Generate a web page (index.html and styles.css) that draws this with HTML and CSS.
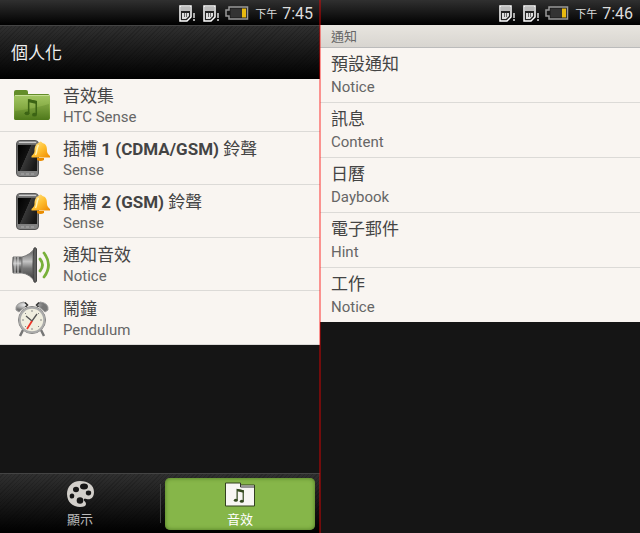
FILE: index.html
```html
<!DOCTYPE html>
<html lang="zh-Hant">
<head>
    <meta charset="UTF-8">
    <meta name="viewport" content="width=device-width, initial-scale=1.0">
    <title>個人化</title>
    <link rel="stylesheet" href="styles.css">
</head>
<body>
    <svg width="0" height="0" class="defs" aria-hidden="true">
        <defs>
            <linearGradient id="green" x1="0" y1="0" x2="0" y2="1"><stop offset="0" stop-color="#a3c763"/><stop offset="0.5" stop-color="#86ab45"/><stop offset="1" stop-color="#567f1f"/></linearGradient>
            <linearGradient id="gold" x1="0" y1="0" x2="1" y2="1"><stop offset="0" stop-color="#ffe89a"/><stop offset="0.5" stop-color="#ffc030"/><stop offset="1" stop-color="#ef8a00"/></linearGradient>
            <linearGradient id="screen" x1="0" y1="0" x2="1" y2="0.6"><stop offset="0" stop-color="#000"/><stop offset="0.5" stop-color="#111"/><stop offset="0.52" stop-color="#383838"/><stop offset="1" stop-color="#181818"/></linearGradient>
            <linearGradient id="metal" x1="0" y1="0" x2="0" y2="1"><stop offset="0" stop-color="#4a4a4a"/><stop offset="0.4" stop-color="#c4c4c4"/><stop offset="0.6" stop-color="#777"/><stop offset="1" stop-color="#333"/></linearGradient>
            <linearGradient id="case" x1="0" y1="0" x2="0" y2="1"><stop offset="0" stop-color="#999"/><stop offset="0.15" stop-color="#5a5a5a"/><stop offset="1" stop-color="#888"/></linearGradient>
            <radialGradient id="ear" cx="0.35" cy="0.3"><stop offset="0" stop-color="#fff"/><stop offset="1" stop-color="#777"/></radialGradient>
            <symbol id="sim" viewBox="0 0 18 17">
                <path d="M1 1h11v11l-4 4H1z" fill="#222" stroke="#fff" stroke-width="1.500"/>
                <path d="M2 2h9v4H2z" fill="#bbb"/>
                <path d="M3 8h7v3l-3 3H3z" fill="#ddd"/>
                <path d="M5.500 8v4M7.500 8v4" stroke="#666"/>
                <path d="M15 8v5M15 14v2" stroke="#ddd" stroke-width="1.500"/>
            </symbol>
            <symbol id="battery" viewBox="0 0 24 14">
                <path d="M4 1h18.500v12H4V10H1V4h3z" fill="#191919" stroke="#999" stroke-width="1.500"/>
                <path d="M5.500 2.500h12v9h-12z" fill="#333"/>
                <path d="M17 2.500h4v9h-4z" fill="#e8b910"/>
            </symbol>
            <symbol id="phone" viewBox="0 0 38 40">
                <rect x="4.500" y="1.500" width="22" height="36" rx="3.500" fill="url(#case)" stroke="#555"/>
                <path d="M7 3.500h17" stroke="#ccc"/>
                <rect x="6" y="6" width="19" height="26" fill="url(#screen)"/>
                <path d="M9 35h13" stroke="#aaa" stroke-dasharray="3 2"/>
                <path d="M25 19h7v2q-3.500 2-7 0z" fill="#e98c00"/>
                <path d="M26.500 4q2-3 4 0c4 1 4.500 4 4.500 8 0 2 1 3 3 5v1.500H19.500V17c2-2 3-3 3-5 0-4 1-7 4-8z" fill="url(#gold)"/>
                <path d="M26.500 6c-2 3-1 6-3 10" stroke="#fff4b5" stroke-width="1.500" fill="none"/>
            </symbol>
            <symbol id="note" viewBox="0 0 12 16">
                <path d="M4 13V1.500L10.500 3v11" fill="none" stroke="currentColor" stroke-width="1.300"/>
                <path d="M4 1l7 1.500v2.500L4 3.500z" fill="currentColor"/>
                <ellipse cx="2.600" cy="13" rx="2.100" ry="1.600" fill="currentColor"/>
                <ellipse cx="9" cy="14.200" rx="2.100" ry="1.600" fill="currentColor"/>
            </symbol>
        </defs>
    </svg>

    <div class="screens">
        <section class="screen">
            <div class="status-bar">
                <svg class="sim"><use href="#sim"/></svg>
                <svg class="sim"><use href="#sim"/></svg>
                <svg class="battery"><use href="#battery"/></svg>
                <span class="ampm">下午</span>
                <span class="clock">7:45</span>
            </div>
            <header class="title-bar"><h1>個人化</h1></header>
            <ul class="list icon-list">
                <li>
                    <svg class="icon" viewBox="0 0 38 40">
                        <path d="M2 6q0-2 2-2h10q2 0 2 2v2h20q1.500 0 1.500 2v22q0 2-2 2H4q-2 0-2-2z" fill="#638d29"/>
                        <path d="M2 11q0-2 2-2h32q2 0 2 2v21q0 2-2 2H4q-2 0-2-2z" fill="url(#green)"/>
                        <path d="M3 9.500h34" stroke="#c5dd93"/>
                        <path d="M3 25q18-2 34-7v14q0 2-1 2H4q-1 0-1-2z" fill="#315d08" opacity="0.2"/>
                        <use href="#note" x="12" y="12" width="14" height="19" color="#3c6414"/>
                    </svg>
                    <div><h2>音效集</h2><p>HTC Sense</p></div>
                </li>
                <li>
                    <svg class="icon"><use href="#phone"/></svg>
                    <div><h2>插槽 <b>1 (CDMA/GSM)</b> 鈴聲</h2><p>Sense</p></div>
                </li>
                <li>
                    <svg class="icon"><use href="#phone"/></svg>
                    <div><h2>插槽 <b>2 (GSM)</b> 鈴聲</h2><p>Sense</p></div>
                </li>
                <li>
                    <svg class="icon" viewBox="0 0 38 40">
                        <path d="M1 12h9v16H1q-1-8 0-16z" fill="url(#metal)" stroke="#777"/>
                        <path d="M10 12q8-2 13-9v34q-5-8-13-9z" fill="url(#metal)" stroke="#777"/>
                        <path d="M3 12v16M6 12v16" stroke="#ddd"/>
                        <path d="M22 3q2-1 2.500 1v32q-.5 2-2.500 1-1-8-1-17t1-17z" fill="#606060" stroke="#444"/>
                        <path d="M28 14q5 6 0 12M32 8q9 12 0 24" fill="none" stroke="#78b03a" stroke-width="2.800" stroke-linecap="round"/>
                    </svg>
                    <div><h2>通知音效</h2><p>Notice</p></div>
                </li>
                <li>
                    <svg class="icon" viewBox="0 0 38 40">
                        <path d="M11 31l-3 6M29 31l3 6" stroke="#777" stroke-width="2.500"/>
                        <path d="M4 11q-1-7 8-8l3 3-8 7zM36 11q1-7-8-8l-3 3 8 7z" fill="url(#ear)" stroke="#999"/>
                        <path d="M13 3.500l2.500 2.500-2 2M27 3.500L24.500 6l2 2" fill="none" stroke="#333" stroke-width="1.500"/>
                        <circle cx="20" cy="21" r="13.500" fill="#f0eedf" stroke="#777"/>
                        <circle cx="20" cy="21" r="12.300" fill="none" stroke="#aaa" stroke-width="2"/>
                        <path d="M20 11v2M20 29v2M10 21h2M28 21h2M13 14l1 1M27 28l-1-1M27 14l-1 1M13 28l1-1" stroke="#888"/>
                        <path d="M14 17l6 5 5-7" fill="none" stroke="#555" stroke-width="1.300"/>
                        <path d="M20 22l-5 8" stroke="#ed3427" stroke-width="1.800"/>
                    </svg>
                    <div><h2>鬧鐘</h2><p>Pendulum</p></div>
                </li>
            </ul>
            <nav class="tabs">
                <button type="button" class="tab">
                    <svg viewBox="0 0 28 28">
                        <path d="M14 1C6 1 1 7 1 14c0 8 6 13 13 13 4 0 6-1 6-3 0-3-3-3-2-5 1-1 4 1 6 0 3-1 4-4 4-7C28 5 22 1 14 1z" fill="#d2cfca"/>
                        <g fill="#171717"><ellipse cx="10" cy="9.500" rx="3" ry="2.700"/><ellipse cx="18" cy="6.500" rx="4" ry="2.900"/><ellipse cx="22.500" cy="13" rx="2.700" ry="2.400"/><ellipse cx="6" cy="16" rx="2.300" ry="2.600"/><circle cx="14" cy="20.500" r="3.300"/></g>
                    </svg>
                    顯示
                </button>
                <button type="button" class="tab active">
                    <svg viewBox="0 0 30 26">
                        <path d="M.500 2h15v2h14v21H.500z" fill="#f8f6f3" stroke="#33411f"/>
                        <path d="M15.500 2v4h14" fill="none" stroke="#333"/>
                        <use href="#note" x="8" y="7" width="12" height="15" color="#34491f"/>
                    </svg>
                    音效
                </button>
            </nav>
        </section>

        <section class="screen">
            <div class="status-bar">
                <svg class="sim"><use href="#sim"/></svg>
                <svg class="sim"><use href="#sim"/></svg>
                <svg class="battery"><use href="#battery"/></svg>
                <span class="ampm">下午</span>
                <span class="clock">7:46</span>
            </div>
            <h3 class="section-title">通知</h3>
            <ul class="list text-list">
                <li><h2>預設通知</h2><p>Notice</p></li>
                <li><h2>訊息</h2><p>Content</p></li>
                <li><h2>日曆</h2><p>Daybook</p></li>
                <li><h2>電子郵件</h2><p>Hint</p></li>
                <li><h2>工作</h2><p>Notice</p></li>
            </ul>
        </section>
    </div>
</body>
</html>
```
FILE: styles.css
```css
* {
    box-sizing: border-box;
}
body {
    margin: 0;
    background-color: #151515;
    font-family: Roboto, "Noto Sans CJK TC", sans-serif;
}
h1, h2, h3, p, ul {
    margin: 0;
    padding: 0;
    font-weight: normal;
}
.defs {
    position: absolute;
}
.screens {
    display: grid;
    grid-template-columns: 1fr 1fr;
    min-height: 100vh;
    position: relative;
}
.screens::after {
    content: "";
    position: absolute;
    top: 0;
    bottom: 0;
    left: 50%;
    width: 2px;
    margin-left: -1px;
    background-color: rgba(255, 0, 0, 0.4);
}
.screen {
    display: flex;
    flex-direction: column;
    min-width: 0;
}
.status-bar {
    display: flex;
    justify-content: flex-end;
    align-items: center;
    height: 25px;
    padding: 1px 7px 0 0;
    background: linear-gradient(#303030, #000);
    color: #ddd;
}
.sim {
    width: 18px;
    height: 17px;
    margin-left: 6px;
}
.battery {
    width: 24px;
    height: 14px;
    margin: 0 6px 0 4px;
}
.ampm {
    margin-right: 5px;
    font-size: 11px;
}
.clock {
    font-size: 16px;
}
.title-bar {
    display: flex;
    align-items: center;
    height: 54px;
    padding-left: 11px;
    border-top: 1px solid #444;
    background: repeating-linear-gradient(135deg, transparent 0 2px, rgba(0, 0, 0, 0.15) 2px 3px), linear-gradient(#303030, #000);
    color: #eee;
}
h1 {
    margin-bottom: 3px;
    font-size: 17px;
}
.list {
    list-style: none;
    background-color: #f9f5f1;
}
.list li {
    border-bottom: 1px solid #dcdad7;
}
h2 {
    color: #444;
    font-size: 17px;
    line-height: 22px;
}
.list p {
    color: #666;
    font-size: 15px;
    line-height: 20px;
}
.icon-list li {
    display: flex;
    align-items: center;
    gap: 13px;
    height: 53px;
    padding: 2px 0 0 12px;
}
.icon-list li:last-child {
    height: 54px;
}
.icon {
    width: 38px;
    height: 40px;
}
.text-list li {
    padding: 5px 11px 3px;
}
.text-list p {
    line-height: 24px;
}
.text-list li:last-child {
    border-bottom: none;
}
.section-title {
    height: 23px;
    padding-left: 11px;
    border-bottom: 1px solid #bbb;
    background: linear-gradient(#e8e5df, #d8d5d0);
    color: #666;
    font-size: 13px;
    line-height: 23px;
}
.tabs {
    display: grid;
    grid-template-columns: 1fr 1fr;
    height: 60px;
    margin-top: auto;
    border-top: 1px solid #444;
    background: repeating-linear-gradient(135deg, transparent 0 2px, rgba(0, 0, 0, 0.15) 2px 3px), linear-gradient(#303030, #000);
}
.tabs::before {
    content: "";
    grid-area: 1 / 2;
    width: 1px;
    margin: 10px 0;
    background-color: #444;
}
.tab {
    display: flex;
    grid-row: 1;
    flex-direction: column;
    align-items: center;
    justify-content: center;
    gap: 2px;
    margin: 4px 5px 3px;
    padding: 2px 0 0;
    border: none;
    border-radius: 5px;
    background: none;
    color: #bbb;
    font-family: inherit;
    font-size: 13px;
    line-height: 20px;
}
.tab svg {
    width: 28px;
    height: 28px;
}
.tab.active {
    grid-column: 2;
    background-color: #86b649;
    box-shadow: inset 0 0 4px #4d7522;
    color: #fff;
}
.tab.active svg {
    width: 30px;
}
```
